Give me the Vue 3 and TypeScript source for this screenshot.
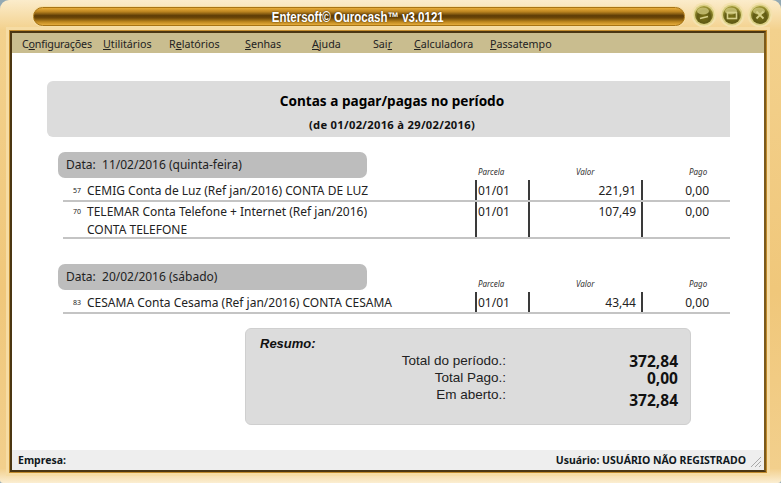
<script setup lang="ts">
interface Row { n: string; d: string[]; p: string; v: string; g: string }
interface Group { date: string; rows: Row[] }
const menu = [
  { a: 'C', u: 'o', b: 'nfigurações', w: 81 },
  { a: '', u: 'U', b: 'tilitários', w: 66 },
  { a: 'R', u: 'e', b: 'latórios', w: 76 },
  { a: '', u: 'S', b: 'enhas', w: 67 },
  { a: '', u: 'A', b: 'juda', w: 61 },
  { a: 'Sai', u: 'r', b: '', w: 41 },
  { a: '', u: 'C', b: 'alculadora', w: 76 },
  { a: '', u: 'P', b: 'assatempo', w: 80 },
]
const groups: Group[] = [
  { date: '11/02/2016 (quinta-feira)', rows: [
    { n: '57', d: ['CEMIG Conta de Luz (Ref jan/2016) CONTA DE LUZ'], p: '01/01', v: '221,91', g: '0,00' },
    { n: '70', d: ['TELEMAR Conta Telefone + Internet (Ref jan/2016)', 'CONTA TELEFONE'], p: '01/01', v: '107,49', g: '0,00' },
  ] },
  { date: '20/02/2016 (sábado)', rows: [
    { n: '83', d: ['CESAMA Conta Cesama (Ref jan/2016) CONTA CESAMA'], p: '01/01', v: '43,44', g: '0,00' },
  ] },
]
</script>

<template>
  <div class="window">
    <div class="titlebar">
      <div class="capsule"><span class="title">Entersoft© Ourocash™ v3.0121</span></div>
      <div class="btns">
        <svg v-for="i in 3" :key="i" class="btn" width="26" height="26" viewBox="0 0 26 26">
          <defs>
            <radialGradient :id="'g' + i" cx="50%" cy="60%" r="60%">
              <stop offset="0" stop-color="#7c7418" />
              <stop offset="0.6" stop-color="#5f5a14" />
              <stop offset="1" stop-color="#a9a03a" />
            </radialGradient>
          </defs>
          <circle cx="13" cy="13" r="12.5" fill="#f4e2ae" />
          <circle cx="13" cy="13" r="10.5" fill="#d9cf85" />
          <circle cx="13" cy="13" r="9" :fill="'url(#g' + i + ')'" />
          <ellipse cx="12" cy="9" rx="6" ry="3.6" fill="#cfc97c" opacity=".8" />
          <path v-if="i === 1" d="M9 16.5l8-2" stroke="#d6d08a" stroke-width="1.8" />
          <rect v-if="i === 2" x="8.5" y="10.5" width="9" height="6" fill="none" stroke="#d6d08a" stroke-width="1.6" />
          <path v-if="i === 3" d="M9.5 9.5l7 7M16.5 9.5l-7 7" stroke="#d6d08a" stroke-width="1.8" />
        </svg>
      </div>
    </div>
    <div class="inner">
      <nav class="menu">
        <span v-for="m in menu" :key="m.a + m.u + m.b" class="item" :style="{ width: m.w + 'px' }">{{ m.a }}<u>{{ m.u }}</u>{{ m.b }}</span>
      </nav>
      <main class="content">
        <header class="report">
          <h1>Contas a pagar/pagas no período</h1>
          <p>(de 01/02/2016 à 29/02/2016)</p>
        </header>
        <section v-for="g in groups" :key="g.date" class="group">
          <div class="grouphead">
            <div class="pill">Data:&nbsp; {{ g.date }}</div>
            <span class="cap c1">Parcela</span>
            <span class="cap c2">Valor</span>
            <span class="cap c3">Pago</span>
          </div>
          <div v-for="r in g.rows" :key="r.n" class="row">
            <span class="num">{{ r.n }}</span>
            <div class="desc"><div v-for="l in r.d" :key="l">{{ l }}</div></div>
            <span class="cell parc">{{ r.p }}</span>
            <span class="cell val">{{ r.v }}</span>
            <span class="cell pago">{{ r.g }}</span>
          </div>
        </section>
        <section class="resumo">
          <h2>Resumo:</h2>
          <div class="line l1"><span>Total do período.:</span><b>372,84</b></div>
          <div class="line l2"><span>Total Pago.:</span><b>0,00</b></div>
          <div class="line l3"><span>Em aberto.:</span><b>372,84</b></div>
        </section>
      </main>
      <footer class="status">
        <b>Empresa:</b>
        <b class="user">Usuário: USUÁRIO NÃO REGISTRADO</b>
        <svg class="grip" width="14" height="14" viewBox="0 0 14 14"><path d="M13 3L3 13M13 7L7 13M13 11L11 13" stroke="#a8a8a8" stroke-width="1" /></svg>
      </footer>
    </div>
  </div>
</template>

<style>
html, body { margin: 0; background: #93a9b3; }
</style>

<style scoped>
.window {
  width: 781px; height: 483px; box-sizing: border-box; overflow: hidden;
  display: flex; flex-direction: column;
  padding: 2px 11px 11px 11px;
  border-radius: 9px 9px 3px 3px;
  background: linear-gradient(180deg, #fbeccb 0, #f3d18d 30px, #f0c77a 60%, #f2cf8c 97%, #fbeed2 100%);
  font-family: "Noto Sans", "DejaVu Sans", sans-serif;
  color: #1a1a1a;
}
.titlebar { height: 28px; display: flex; align-items: flex-start; flex: none; }
.capsule {
  margin: 5px 0 0 22px; width: 652px; height: 19px; box-sizing: border-box; flex: none;
  display: flex; align-items: center; justify-content: center; padding-right: 2px;
  border-radius: 10px;
  border: 1px solid #a87414;
  background: linear-gradient(180deg, #e9ad3a 0, #bb8420 22%, #5d3c06 45%, #6b4608 58%, #c0891f 82%, #e6ad3d 100%);
  box-shadow: 0 0 0 1px #f7dfa6;
}
.title {
  font: bold 14px/1 "Liberation Sans", sans-serif; color: #fff; white-space: nowrap;
  text-shadow: 0 0 2px #3a2500;
  transform: scaleX(.82);
}
.btns { display: flex; gap: 2px; margin: 0 0 0 6px; flex: none; }
.btn { display: block; }
.inner {
  flex: 1; min-height: 0; display: flex; flex-direction: column; margin-left: -1px;
  border: 2px solid #4b3612; border-right-color: #7b5a1c;
  box-shadow: 0 0 0 1px #c08a2c, 0 0 0 4px #f6dca4;
  margin-right: 4px; margin-top: 1px;
  background: #fff;
}
.menu {
  flex: none; height: 20px; box-sizing: border-box; display: flex; align-items: center; padding: 1px 0 0 10px;
  background: #c9bd8f; font-size: 10.7px; color: #222;
}
.item { display: block; white-space: nowrap; }
.item:first-child { letter-spacing: -.2px; }
.content { flex: 1; min-height: 0; padding: 28px 34px 0 35px; }
.report {
  height: 56px; background: #dcdcdc; border-radius: 6px 0 0 6px; text-align: center;
  display: flex; flex-direction: column; padding-left: 7px;
}
.report h1 { margin: 0; padding-top: 11px; font-size: 13.6px; line-height: 18px; font-weight: 700; color: #000; }
.report p { margin: 0; padding-top: 8px; font-size: 11.2px; line-height: 14px; font-weight: 700; color: #111; letter-spacing: .3px; }
.group { margin: 15px 0 0 11px; }
.group + .group { margin-top: 25px; }
.grouphead { height: 26px; position: relative; margin-bottom: 2px; }
.pill {
  width: 309px; height: 26px; box-sizing: border-box; padding-left: 8px; line-height: 25px;
  background: #bdbdbd; border-radius: 7px; font-size: 12px; color: #222;
}
.cap { position: absolute; top: 14px; font-size: 8px; line-height: 12px; font-style: italic; color: #333; }
.c1 { left: 420px; } .c2 { left: 518px; } .c3 { left: 631px; }
.row {
  display: grid; grid-template-columns: 24px 388px 53px 113px 89px; margin-left: 5px; width: 667px;
  border-bottom: 2px solid #c4c4c4; font-size: 12px; line-height: 18px; color: #222;
}
.row .num { font-size: 7px; text-align: right; padding: 2px 6px 0 0; line-height: 18px; }
.desc { padding-top: 2px; }
.cell { border-left: 2px solid #3a3a3a; padding-top: 2px; box-sizing: border-box; }
.row + .row .num, .row + .row .desc, .row + .row .cell { padding-top: 1px; }
.row + .row .desc { margin-bottom: -2px; }
.parc { padding-left: 1px; }
.val { text-align: right; padding-right: 5px; }
.pago { text-align: right; padding-right: 21px; }
.resumo {
  width: 446px; height: 97px; margin: 14px 0 0 198px; box-sizing: border-box; padding: 7px 12px 0 14px;
  background: #dcdcdc; border: 1px solid #cfcfcf; border-radius: 6px;
  font-family: "Liberation Sans", sans-serif; color: #222;
}
.resumo h2 { margin: 0; font-size: 13px; line-height: 15px; font-style: italic; font-weight: 700; color: #111; }
.line { display: flex; justify-content: space-between; font-size: 13.5px; line-height: 16px; }
.line span { width: 246px; text-align: right; }
.line b { font: 700 15.5px/16px "Noto Sans", "DejaVu Sans", sans-serif; color: #111; }
.l1 { margin-top: 2px; } .l2 { margin-top: 1px; }
.l3 { margin-top: 1px; height: 16px; } .l3 b { margin-top: 5px; }
.status {
  flex: none; height: 20px; display: flex; align-items: center; justify-content: space-between; position: relative;
  padding: 0 18px 0 6px; background: #eeeeee; font-size: 10.5px; color: #101820;
}
.grip { position: absolute; right: 2px; bottom: 2px; }
</style>
